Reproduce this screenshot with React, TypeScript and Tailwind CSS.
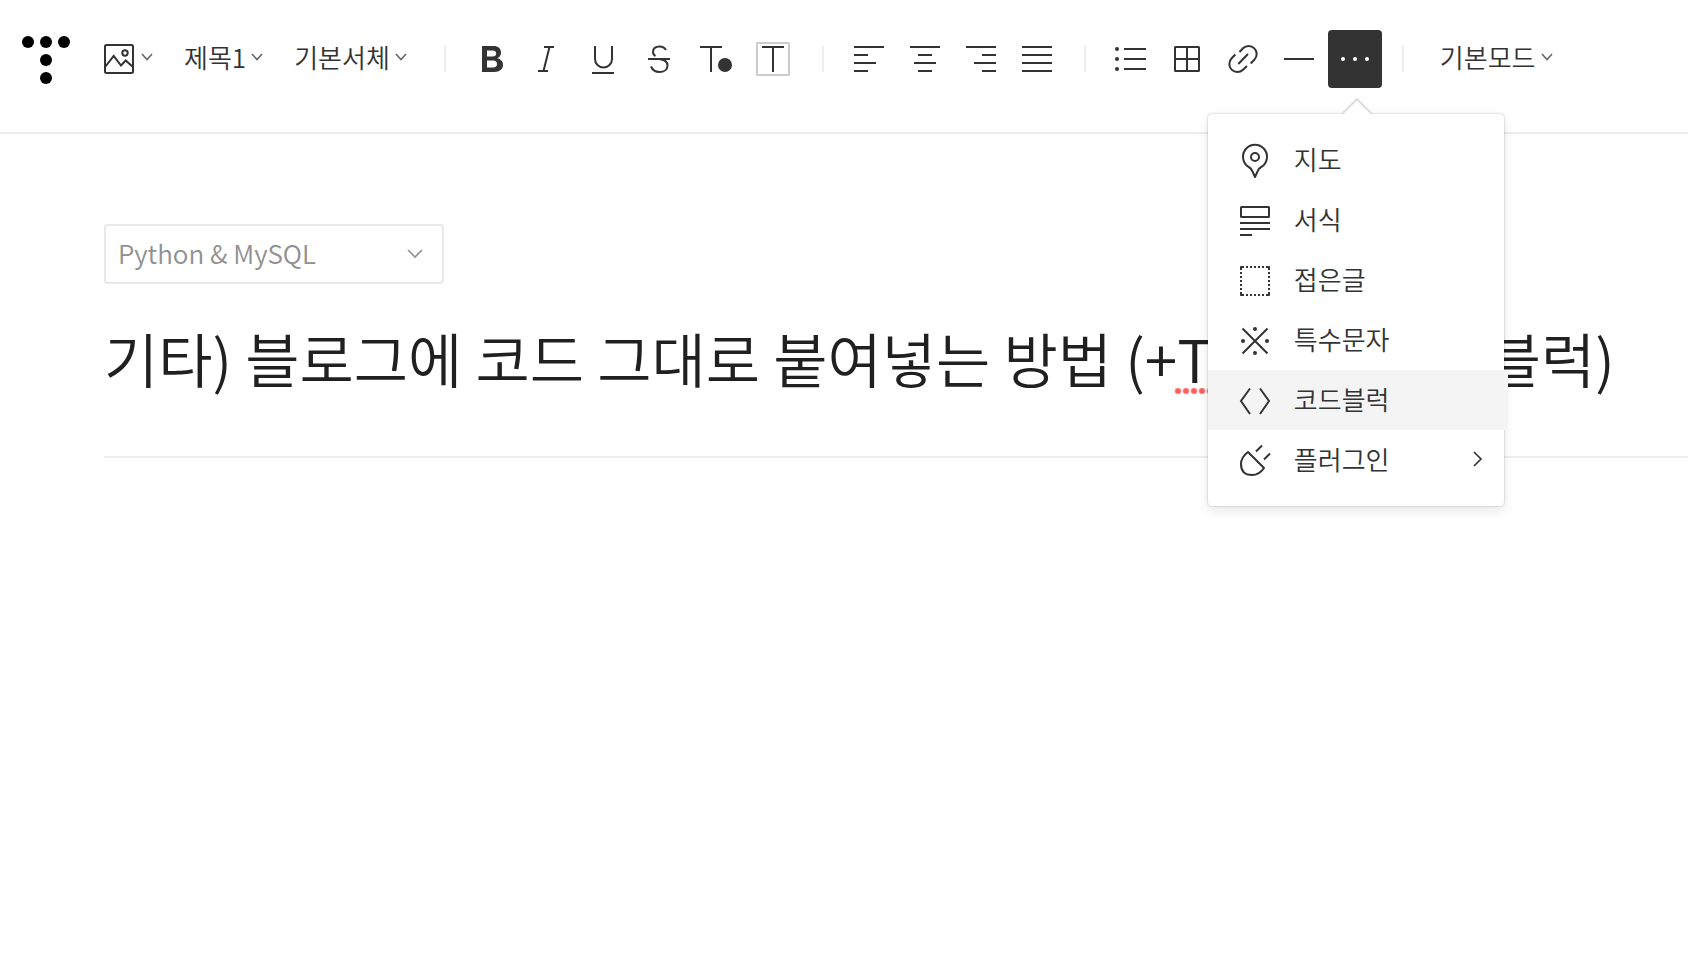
import React, { useState } from 'react';
import clsx from 'clsx';

interface IconProps {
  children: React.ReactNode;
}

interface ToolButtonProps {
  label: string;
  active?: boolean;
  onClick?: () => void;
  children: React.ReactNode;
}

interface DropdownButtonProps {
  label: string;
  children?: React.ReactNode;
}

interface MenuItem {
  id: string;
  label: string;
  icon: React.ReactNode;
  hasSubmenu?: boolean;
}

const Icon: React.FC<IconProps> = ({ children }) => (
  <svg
    viewBox="0 0 34 34"
    className="w-[34px] h-[34px] shrink-0 overflow-visible"
    fill="none"
    stroke="currentColor"
    strokeWidth="2"
    aria-hidden="true"
  >
    {children}
  </svg>
);

const Chevron = () => (
  <svg viewBox="0 0 12 12" className="w-3 h-3 shrink-0 text-[#666]" fill="none" stroke="currentColor" strokeWidth="1.6" aria-hidden="true">
    <path d="M1 1l5 5.5L11 1" />
  </svg>
);

const Logo = () => (
  <svg viewBox="0 0 48 50" className="w-12 h-[50px]" fill="#000" aria-hidden="true">
    <circle cx="6" cy="8" r="6" />
    <circle cx="24" cy="8" r="6" />
    <circle cx="42" cy="8" r="6" />
    <circle cx="24" cy="26" r="6" />
    <circle cx="24" cy="44" r="6" />
  </svg>
);

const Separator = () => <div className="w-0.5 h-[26px] shrink-0 bg-[#eee]" />;

const ToolButton: React.FC<ToolButtonProps> = ({ label, active, onClick, children }) => (
  <button
    type="button"
    aria-label={label}
    onClick={onClick}
    className={clsx(
      'w-[54px] h-[58px] flex items-center justify-center rounded-sm cursor-pointer',
      active ? 'bg-[#333] text-white' : 'text-[#333]'
    )}
  >
    <Icon>{children}</Icon>
  </button>
);

const DropdownButton: React.FC<DropdownButtonProps> = ({ label, children }) => (
  <button type="button" aria-label={label} className="h-[58px] flex items-center gap-[5px] whitespace-nowrap cursor-pointer">
    {children || <span className="pb-1">{label}</span>}
    <Chevron />
  </button>
);

const menuItems: MenuItem[] = [
  {
    id: 'map',
    label: '지도',
    icon: (
      <>
        <path d="M17 34L14.5 28.5C13.5 26 12 24.5 10 23.500A12 12 0 1 1 24 23.500C22 24.5 20.5 26 19.5 28.5Z" strokeLinejoin="round" />
        <circle cx="17" cy="14" r="4" />
      </>
    )
  },
  {
    id: 'template',
    label: '서식',
    icon: (
      <>
        <rect x="3" y="4" width="28" height="10" rx="0.5" />
        <path d="M2 20h30M2 26h30M2 32h12" />
      </>
    )
  },
  {
    id: 'fold',
    label: '접은글',
    icon: (
      <>
        <path d="M4 4h28M4 32h28M3 5v28M31 5v28" strokeDasharray="2 2" />
        <path d="M2.5 4h1.5M3 3.5v1.5M30 4h1.5M31 3.5v1.5M2.5 32h1.5M30 32h1.5M3 31v1.5M31 31v1.5" />
      </>
    )
  },
  {
    id: 'special',
    label: '특수문자',
    icon: (
      <>
        <path d="M4.5 5.5l25 25M29.5 5.5l-25 25" />
        <g fill="currentColor" stroke="none">
          <circle cx="17" cy="6" r="2" />
          <circle cx="17" cy="30" r="2" />
          <circle cx="5" cy="18" r="2" />
          <circle cx="29" cy="18" r="2" />
        </g>
      </>
    )
  },
  {
    id: 'code',
    label: '코드블럭',
    icon: <path d="M12 5.5L3 18l9 13M22 5.5L31 18l-9 13" />
  },
  {
    id: 'plugin',
    label: '플러그인',
    hasSubmenu: true,
    icon: (
      <path
        d="M10 9L26 25C23 29.5 19 32 14 32C7 32 3 28 3 21C3 16 6 12 10 9ZM18 8.5l6-6M26 16.5l6-6"
        strokeLinejoin="round"
      />
    )
  }
];

const MoreMenu = () => {
  const [hovered, setHovered] = useState('code');

  return (
    <div className="absolute z-10 top-[84px] left-[-120px] w-[296px] py-4 bg-white rounded-sm shadow-[0_0_2px_rgba(0,0,0,0.3),0_4px_12px_rgba(0,0,0,0.1)]">
      <svg viewBox="0 0 32 18" className="absolute -top-4 left-[133px] w-8 h-[18px]" aria-hidden="true">
        <path d="M1 16L16 1l15 15v2H1z" fill="#fff" />
        <path d="M1 16L16 1l15 15" fill="none" stroke="#ddd" strokeWidth="2" />
      </svg>
      <ul>
        {menuItems.map((item) => (
          <li key={item.id}>
            <button
              type="button"
              onMouseEnter={() => setHovered(item.id)}
              className={clsx(
                'w-[300px] h-[60px] pl-[30px] pr-[25px] flex items-center gap-[22px] text-left cursor-pointer',
                hovered === item.id && 'bg-[#f4f4f4]'
              )}
            >
              <Icon>{item.icon}</Icon>
              <span className="flex-1 pb-0.5">{item.label}</span>
              {item.hasSubmenu && (
                <svg viewBox="0 0 10 18" className="w-[10px] h-[18px]" fill="none" stroke="currentColor" strokeWidth="1.6" aria-hidden="true">
                  <path d="M1 1l7 7-7 7" />
                </svg>
              )}
            </button>
          </li>
        ))}
      </ul>
    </div>
  );
};

const Toolbar = () => {
  const [menuOpen, setMenuOpen] = useState(true);

  return (
    <header className="flex items-center pt-[30px] pb-11 pl-[22px] border-b-2 border-[#eee]">
      <a href="#" aria-label="홈" className="mr-[34px] shrink-0">
        <Logo />
      </a>
      <div className="flex items-center gap-[31px] pr-[37px]">
        <DropdownButton label="사진">
          <svg viewBox="0 0 30 30" className="w-[30px] h-[30px] mr-0.5" fill="none" stroke="currentColor" strokeWidth="2" aria-hidden="true">
            <rect x="1" y="1" width="28" height="28" rx="1.5" />
            <circle cx="21" cy="9" r="2.7" />
            <path d="M1.5 22.5L9.7 12l7.3 9.5 4.7-5L29 23" />
          </svg>
        </DropdownButton>
        <DropdownButton label="제목1" />
        <DropdownButton label="기본서체" />
      </div>
      <Separator />
      <div className="flex gap-0.5 pl-5 pr-[22px]">
        <ToolButton label="굵게">
          <path
            d="M6 4h11.5c4.7 0 7.5 2.5 7.5 6.5 0 3-1.5 5-4 5.7 3.5.6 6 3 6 6.3 0 4.700-3.500 7.500-8.500 7.500H6zM11 8.500v6h5.500c2.500 0 3.700-1.200 3.700-3S19 8.500 16.500 8.500zM11 18.500V25.500h6c2.700 0 4-1.500 4-3.500s-1.300-3.500-4-3.500z"
            fill="currentColor"
            fillRule="evenodd"
            stroke="none"
          />
        </ToolButton>
        <ToolButton label="기울임">
          <path d="M12 5h10M6 29h10M17.5 5l-6 24" />
        </ToolButton>
        <ToolButton label="밑줄">
          <path d="M7 4v13a8.5 8.5 0 0 0 17 0V4M4 31h22" />
        </ToolButton>
        <ToolButton label="취소선">
          <path d="M22 8C20.5 5.5 18 4.5 15.5 4.5C11.5 4.5 9 6.5 9 10C9 12 9.5 13 11.5 14M4 17h22M15 17C20 17.5 23.5 19.5 23.5 23.5C23.5 27.5 20 30 15.5 30C11.5 30 8.5 28 7 24.5" />
        </ToolButton>
        <ToolButton label="글자색">
          <path d="M0 5h22M11 5v25" />
          <circle cx="25" cy="23" r="7" fill="currentColor" stroke="none" />
        </ToolButton>
        <ToolButton label="글자 배경색">
          <rect x="1" y="1" width="32" height="32" rx="0.5" stroke="#ccc" />
          <path d="M6 5h22M17 5v25" />
        </ToolButton>
      </div>
      <Separator />
      <div className="flex gap-0.5 pl-[18px] pr-5">
        <ToolButton label="왼쪽 정렬">
          <path d="M2 5h30M2 13h14M2 21h22M2 29h14" />
        </ToolButton>
        <ToolButton label="가운데 정렬">
          <path d="M2 5h30M10 13h14M6 21h22M10 29h14" />
        </ToolButton>
        <ToolButton label="오른쪽 정렬">
          <path d="M2 5h30M18 13h14M10 21h22M18 29h14" />
        </ToolButton>
        <ToolButton label="양쪽 정렬">
          <path d="M2 5h30M2 13h30M2 21h30M2 29h30" />
        </ToolButton>
      </div>
      <Separator />
      <div className="flex gap-0.5 pl-[18px] pr-5">
        <ToolButton label="목록">
          <path d="M10 7h22M10 17h22M10 27h22" />
          <g fill="currentColor" stroke="none">
            <circle cx="3" cy="7" r="2" />
            <circle cx="3" cy="17" r="2" />
            <circle cx="3" cy="27" r="2" />
          </g>
        </ToolButton>
        <ToolButton label="표">
          <rect x="5" y="5" width="24" height="24" rx="0.5" />
          <path d="M17 5v24M5 17h24" />
        </ToolButton>
        <ToolButton label="링크">
          <path d="M13.5 10L17 6.3A8 8 0 0 1 28.3 17.7L24.7 21.5M9.3 12.5L5.7 16.3A8 8 0 0 0 17 27.7L21 24M12.3 22L22 12" />
        </ToolButton>
        <ToolButton label="구분선">
          <path d="M2 17h30" />
        </ToolButton>
        <div className="relative">
          <ToolButton label="더보기" active={menuOpen} onClick={() => setMenuOpen(!menuOpen)}>
            <g fill="currentColor" stroke="none">
              <circle cx="5" cy="17" r="2" />
              <circle cx="17" cy="17" r="2" />
              <circle cx="29" cy="17" r="2" />
            </g>
          </ToolButton>
          {menuOpen && <MoreMenu />}
        </div>
      </div>
      <Separator />
      <div className="pl-9">
        <DropdownButton label="기본모드" />
      </div>
    </header>
  );
};

const App = () => {
  const [category, setCategory] = useState('Python & MySQL');
  const [title, setTitle] = useState('기타) 블로그에 코드 그대로 붙여넣는 방법 (+Tistory 코드블럭)');

  return (
    <div className="min-h-screen overflow-x-hidden bg-white text-[26px] leading-[38px] font-[350] text-[#333] font-['Noto_Sans_CJK_KR',sans-serif]">
      <Toolbar />
      <main className="pt-[90px] pl-[104px]">
        <div className="relative w-[340px]">
          <select
            aria-label="카테고리"
            value={category}
            onChange={(e) => setCategory(e.target.value)}
            className="block w-full h-[60px] pl-3 pr-12 pb-0.5 appearance-none bg-white border-2 border-[#e8e8e8] rounded-sm text-[#909090] outline-none"
          >
            <option>Python & MySQL</option>
          </select>
          <svg viewBox="0 0 16 10" className="absolute top-[25px] right-[21px] w-4 h-[10px] text-[#909090] pointer-events-none" fill="none" stroke="currentColor" strokeWidth="1.6" aria-hidden="true">
            <path d="M1 1l7 7 7-7" />
          </svg>
        </div>
        <div className="relative mt-[30px] pb-[54px] border-b-2 border-[#f0f0f0]">
          <input
            type="text"
            aria-label="제목"
            spellCheck={false}
            value={title}
            onChange={(e) => setTitle(e.target.value)}
            className="block w-full h-[88px] text-[59px] leading-[88px] text-[#202020] outline-none"
          />
          {/* spelling mark under the latin word */}
          <div className="absolute top-[74px] left-[1070px] w-[200px] h-[6px] bg-[radial-gradient(circle_at_center,#fa5f5b_2px,#fda5a2_3px,transparent_4px)] bg-[length:8px_6px] pointer-events-none" />
        </div>
      </main>
    </div>
  );
};

export default App;
